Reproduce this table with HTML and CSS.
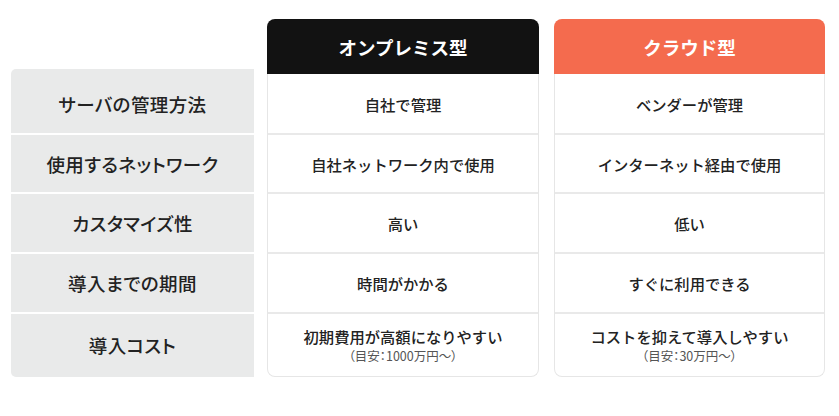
FILE: index.html
```html
<!DOCTYPE html>
<html lang="ja">
<head>
<meta charset="utf-8">
<link rel="stylesheet" href="styles.css">
</head>
<body>
<div class="compare">
  <div class="labels">
    <div class="label first">サーバの管理方法</div>
    <div class="label">使用するネットワーク</div>
    <div class="label">カスタマイズ性</div>
    <div class="label">導入までの期間</div>
    <div class="label last">導入コスト</div>
  </div>
  <div class="card onprem">
    <div class="head">オンプレミス型</div>
    <div class="body">
      <div class="cell first">自社で管理</div>
      <div class="cell">自社ネットワーク内で使用</div>
      <div class="cell">高い</div>
      <div class="cell">時間がかかる</div>
      <div class="cell last">初期費用が高額になりやすい<span class="note">（目安：1000万円〜）</span></div>
    </div>
  </div>
  <div class="card cloud">
    <div class="head">クラウド型</div>
    <div class="body">
      <div class="cell first">ベンダーが管理</div>
      <div class="cell">インターネット経由で使用</div>
      <div class="cell">低い</div>
      <div class="cell">すぐに利用できる</div>
      <div class="cell last">コストを抑えて導入しやすい<span class="note">（目安：30万円〜）</span></div>
    </div>
  </div>
</div>
</body>
</html>
```

FILE: styles.css
```css
* { box-sizing: border-box; }
html, body { margin: 0; padding: 0; background: #fff; }
body {
  font-family: "Noto Sans CJK JP", "Noto Sans", sans-serif;
  color: #222;
}
.compare {
  display: flex;
  align-items: flex-start;
  padding: 19px 0 0 11px;
}
.labels {
  width: 243px;
  margin-top: 50px;
  background: #e9eaea;
  border-radius: 5px 0 0 5px;
  display: flex;
  flex-direction: column;
}
.label {
  height: 59px;
  border-top: 2px solid #fff;
  display: flex;
  align-items: center;
  justify-content: center;
  font-size: 18.5px;
  font-weight: 500;
  color: #222;
  font-feature-settings: "palt" 1;
  letter-spacing: 0.4px;
}
.label.first { height: 64px; border-top: 0; padding-top: 5px; }
.label.last { height: 65px; padding-bottom: 2px; }
.label:nth-child(3), .label:nth-child(4) { height: 60px; }

.card {
  display: flex;
  flex-direction: column;
}
.onprem { width: 272px; margin-left: 13px; }
.cloud { width: 271px; margin-left: 15px; }
.head {
  height: 55px;
  border-radius: 8px 8px 0 0;
  display: flex;
  align-items: center;
  justify-content: center;
  color: #fff;
  font-size: 18.5px;
  font-weight: 700;
}
.onprem .head { background: #121212; }
.cloud .head { background: #f46b4e; }
.body {
  border: 1px solid #e6e6e6;
  border-top: 0;
  border-radius: 0 0 8px 8px;
  display: flex;
  flex-direction: column;
}
.cell {
  height: 59px;
  border-top: 2px solid #e9e9e9;
  display: flex;
  flex-direction: column;
  align-items: center;
  justify-content: center;
  font-size: 15.3px;
  font-weight: 500;
  color: #222;
}
.cell.first { border-top: 0; }
.cell:nth-child(3), .cell:nth-child(4) { height: 60px; }
.cell.last { height: 64px; padding-bottom: 2px; }
.note {
  font-size: 12.5px;
  font-weight: 400;
  color: #555;
  line-height: 16px;
  margin-top: 1px;
  font-feature-settings: "palt" 1;
}
```
